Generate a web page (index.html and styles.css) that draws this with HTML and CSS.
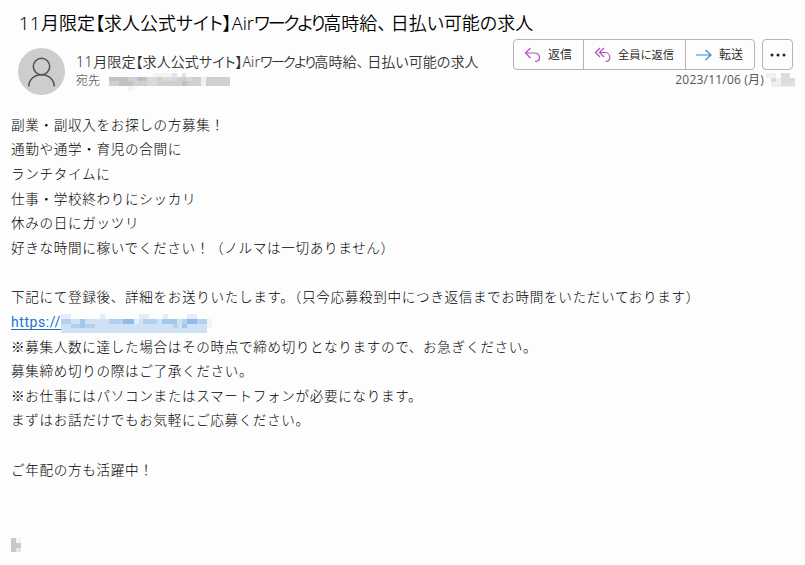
FILE: index.html
```html
<!doctype html>
<html lang="ja">
  <head>
    <meta charset="UTF-8" />
    <title>メール</title>
    <link rel="stylesheet" href="styles.css">
  </head>
  <body>
    <h1 class="subject"><span class="num">11</span>月限定【求人公式サイト】Air<span class="kana">ワークより</span>高時給<span class="comma">、</span>日払い可能の求人</h1>

    <header class="mail-header">
      <svg class="avatar" viewBox="0 0 47 47">
        <circle cx="23.5" cy="23.5" r="23.5" fill="#cdcdcd" />
        <g fill="none" stroke="#505050" stroke-width="1.5">
          <circle cx="23.5" cy="18.5" r="8.2" />
          <path d="M10.8 38.5c0-7 5.4-11.800 12.700-11.800s12.700 4.800 12.700 11.800" />
        </g>
      </svg>

      <div class="sender">
        <div class="sender-name"><span class="num">11</span>月限定【求人公式サイト】Air<span class="kana">ワークより</span>高時給<span class="comma">、</span>日払い可能の求人</div>
        <div class="recipient">
          <span>宛先</span>
          <svg class="mask-address" viewBox="0 0 122 19" shape-rendering="crispEdges">
            <path fill="#d2cfd0" d="M0 5h92v9H0zM97 5h24v9H97z" />
            <path fill="#c4c1c3" d="M0 5h19v4H0zM10 9h14v5H10zM34 5h4v4h-4zM73 9h5v5h-5z" />
            <path fill="#d9d8dc" d="M38 5h10v9H38zM58 5h10v4H58zM78 5h5v4h-5z" />
            <path fill="#c4d0dc" d="M24 5h5v4h-5zM63 9h5v5h-5zM73 5h5v4h-5z" />
            <path fill="#b3bdcb" d="M29 5h5v4h-5z" />
            <path fill="#e7d9cb" d="M53 5h5v4h-5z" />
            <path fill="#e8f4fb" d="M92 5h5v9h-5z" />
            <path fill="#f4f4f5" d="M44 1h19v4H44zM19 14h5v5h-5z" />
            <path fill="#e2e4e7" d="M63 1h5v4h-5zM73 1h4v4h-4z" />
          </svg>
        </div>
      </div>

      <div class="header-right">
        <div class="actions">
          <div class="button-group">
            <button type="button">
              <svg class="icon purple" viewBox="0 0 18 16"><path d="M6.500 1L1.500 6l5 5M1.500 6H10c3.500 0 5.500 2 5.500 4.500s-1.500 4-4.500 4" /></svg>
              返信
            </button>
            <button type="button" class="reply-all">
              <svg class="icon purple" viewBox="0 0 18 16"><path d="M6 1L1.500 5.500 6 10M10 1L5.500 5.500 10 10M5.500 5.500h5c3 0 5.300 2 5.300 4.700s-1.500 4.300-4.300 4.300" /></svg>
              全員に返信
            </button>
            <button type="button" class="forward">
              <svg class="icon blue" viewBox="0 0 18 16"><path d="M1 8h15M10.500 3l5.500 5-5.500 5" /></svg>
              転送
            </button>
          </div>
          <button type="button" class="more">
            <svg viewBox="0 0 16 4"><circle cx="2" cy="2" r="1.500" /><circle cx="8" cy="2" r="1.500" /><circle cx="14" cy="2" r="1.500" /></svg>
          </button>
        </div>
        <div class="date">
          <span>2023/11/06 (月)</span>
          <svg class="mask-time" viewBox="0 0 30 14" shape-rendering="crispEdges">
            <path fill="#efefef" d="M0 0h10v5H0zM5 5h24v9H5z" />
            <path fill="#dcdcdd" d="M5 5h5v4H5zM15 0h9v9h-9zM24 5h5v4h-5z" />
            <path fill="#e0e0e0" d="M15 9h14v4H15z" />
          </svg>
        </div>
      </div>
    </header>

    <main class="mail-body">
      <p>副業・副収入をお探しの方募集！</p>
      <p>通勤や通学・育児の合間に</p>
      <p>ランチタイムに</p>
      <p>仕事・学校終わりにシッカリ</p>
      <p>休みの日にガッツリ</p>
      <p>好きな時間に稼いでください！（ノルマは一切ありません）</p>
      <p><br></p>
      <p>下記にて登録後、詳細をお送りいたします。（只今応募殺到中につき返信までお時間をいただいております）</p>
      <p class="link-line">
        <a href="#">https://</a>
        <svg class="mask-link" viewBox="0 0 151 19" shape-rendering="crispEdges">
          <path fill="#cfe2f5" d="M0 5h146v14H0z" />
          <path fill="#b3d1ee" d="M0 5h10v5H0zM10 10h24v4H10zM48 5h14v5H48zM82 5h14v5H82zM112 10h5v4h-5zM121 5h25v5h-25z" />
          <path fill="#a3c8eb" d="M19 5h5v9h-5zM101 5h15v5h-15zM121 10h5v4h-5z" />
          <path fill="#8fbce7" d="M62 5h11v5H62zM126 5h10v5h-10z" />
          <path fill="#e1eefa" d="M0 0h5v5H0zM5 0h5v5H5zM39 0h5v5h-5zM78 0h5v5h-5zM83 0h5v5h-5zM102 0h5v5h-5zM126 0h10v5h-10zM73 5h5v5h-5z" />
          <path fill="#edf5fc" d="M146 5h5v9h-5z" />
        </svg>
      </p>
      <p>※募集人数に達した場合はその時点で締め切りとなりますので、お急ぎください。</p>
      <p>募集締め切りの際はご了承ください。</p>
      <p>※お仕事にはパソコンまたはスマートフォンが必要になります。</p>
      <p>まずはお話だけでもお気軽にご応募ください。</p>
      <p><br></p>
      <p>ご年配の方も活躍中！</p>
      <p><br></p>
      <p><br></p>
      <p class="signature">
        <svg class="mask-sign" viewBox="0 0 10 14" shape-rendering="crispEdges">
          <path fill="#c9c9c9" d="M0 0h5v14H0zM5 5h5v5H5z" />
          <path fill="#e5e5e5" d="M5 10h5v4H5z" />
          <path fill="#f4f4f4" d="M5 0h5v5H5z" />
        </svg>
      </p>
    </main>
  </body>
</html>
```

FILE: styles.css
```css
* {
  box-sizing: border-box;
}

body {
  margin: 0;
  height: 565px;
  overflow: hidden;
  background-color: #fdfdfd;
  color: #000;
  font-family: 'Noto Sans CJK JP', sans-serif;
  font-weight: 300;
}

svg {
  display: block;
  flex: none;
}

.subject {
  margin: 0;
  padding: 9px 0 0 19px;
  height: 39px;
  font-family: 'Noto Sans', 'Noto Sans CJK JP', sans-serif;
  font-size: 18px;
  font-weight: 350;
  line-height: 28px;
  color: #000;
  white-space: nowrap;
  font-feature-settings: 'palt';
}

.num {
  letter-spacing: 0.04em;
}

.kana {
  letter-spacing: -0.12em;
}

.comma {
  margin-right: 0.25em;
}

.mail-header {
  display: flex;
  height: 72.8px;
  padding-left: 18px;
}

.avatar {
  width: 47px;
  height: 47px;
  margin-top: 9px;
}

.sender {
  margin: 13px 0 0 11px;
  color: #333;
  white-space: nowrap;
}

.sender-name {
  font-family: 'Noto Sans', 'Noto Sans CJK JP', sans-serif;
  font-size: 14.1px;
  font-weight: 350;
  line-height: 20px;
  font-feature-settings: 'palt';
}

.recipient {
  display: flex;
  font-size: 12px;
  line-height: 15px;
}

.mask-address {
  width: 122px;
  height: 19px;
  margin-left: 9px;
}

.header-right {
  margin-left: auto;
}

.actions {
  display: flex;
  justify-content: flex-end;
  gap: 7px;
  padding-right: 12px;
}

.button-group {
  display: flex;
  height: 31px;
  border: 1px solid #b4b4b4;
  border-radius: 4px;
}

button {
  display: flex;
  align-items: center;
  gap: 6px;
  width: 69px;
  padding: 0 0 2px 10px;
  border: none;
  background: none;
  color: #222;
  font-family: inherit;
  font-size: 12px;
  font-weight: 350;
  white-space: nowrap;
}

.button-group button + button {
  border-left: 1px solid #b4b4b4;
}

.button-group .reply-all {
  width: 102px;
  font-size: 11.3px;
  font-feature-settings: 'palt';
}

.forward {
  width: 69px;
  padding-left: 9px;
}

.icon {
  width: 18px;
  height: 16px;
  margin-top: 2px;
  fill: none;
  stroke-width: 1.2;
}

.purple {
  stroke: #b14fbd;
}

.blue {
  stroke: #2f8fd0;
}

.more {
  justify-content: center;
  width: 31px;
  height: 31px;
  padding: 0;
  border: 1px solid #b4b4b4;
  border-radius: 4px;
}

.more svg {
  width: 16px;
  height: 4px;
  fill: #222;
}

.date {
  display: flex;
  justify-content: flex-end;
  padding-right: 9px;
  color: #555;
  font-family: 'Open Sans', 'Noto Sans CJK JP', sans-serif;
  font-size: 12px;
  font-weight: 400;
  letter-spacing: 0.2px;
  line-height: 20px;
}

.mask-time {
  width: 30px;
  height: 14px;
  margin: 3px 0 0 2px;
}

/* Message text */
.mail-body {
  padding-left: 11px;
  font-size: 13.6px;
  letter-spacing: 0.65px;
}

.mail-body p {
  margin: 0;
  height: 24.65px;
  line-height: 24.65px;
  white-space: nowrap;
}

.mail-body .link-line {
  display: flex;
}

.link-line a {
  height: 21px;
  border-bottom: 1px solid #1a73c8;
  color: #1a73c8;
  font-family: Roboto, sans-serif;
  font-size: 14px;
  font-weight: 400;
  letter-spacing: 0.55px;
  line-height: 26px;
  text-decoration: none;
}

.mask-link {
  width: 151px;
  height: 19px;
  margin-top: 5px;
}

.mask-sign {
  width: 10px;
  height: 14px;
}

.signature {
  padding-top: 7px;
}
```
